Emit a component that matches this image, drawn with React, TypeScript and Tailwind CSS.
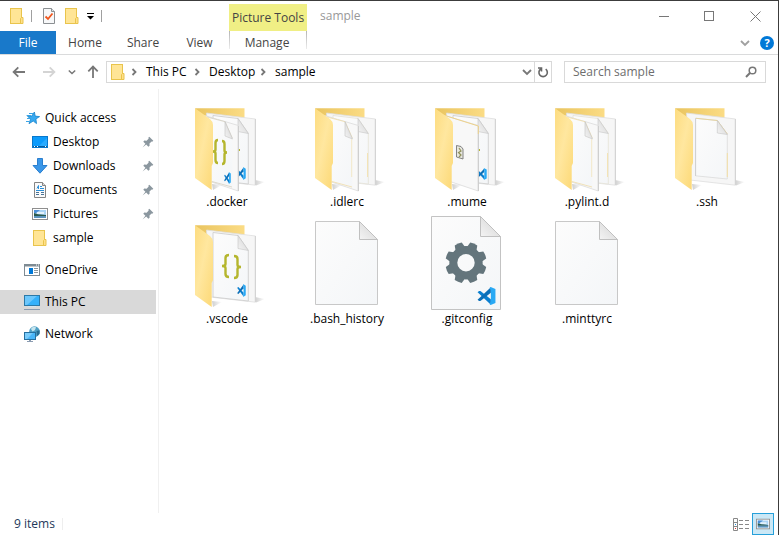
import type { ReactNode } from "react";

type SvgProps = { className?: string };

function FolderIcon({ className = "h-4 w-4" }: SvgProps) {
  return (
    <svg viewBox="0 0 16 16" className={`shrink-0 ${className}`} aria-hidden="true">
      <rect x="1.5" y="0.5" width="11" height="15" fill="#ffe596" stroke="#e9c44c" />
      <path d="M11.5 15.5V10.5L12.5 9.5H14V15.5Z" fill="#ffe08a" stroke="#e9c44c" />
    </svg>
  );
}

function CheckPageIcon() {
  return (
    <svg viewBox="0 0 14 16" className="h-4 w-3.5 shrink-0" aria-hidden="true">
      <path d="M1.5.5H9.5L12.5 3.5V15.5H1.5Z" fill="#f7f8f9" stroke="#8b8f92" />
      <path d="M9.5.5V3.5H12.5" fill="#dfe2e4" stroke="#8b8f92" />
      <path d="M3.5 8.5L6 11L10.5 5.5" fill="none" stroke="#f0561d" strokeWidth="1.8" />
    </svg>
  );
}

function Chevron({ className = "h-2.5 w-2.5 text-[#777]", down = false }: { className?: string; down?: boolean }) {
  return (
    <svg viewBox="0 0 10 10" className={`shrink-0 ${className}`} fill="none" stroke="currentColor" strokeWidth="1.8" aria-hidden="true">
      <path d={down ? "M1 3L5 7L9 3" : "M3.5 2L6.5 5L3.5 8"} />
    </svg>
  );
}

function Arrow({ turn }: { turn: string }) {
  return (
    <svg viewBox="0 0 14 14" className={`h-3.5 w-3.5 ${turn}`} fill="none" stroke="currentColor" strokeWidth="1.8" aria-hidden="true">
      <path d="M13 7H1.8M6.3 2.3L1.6 7L6.3 11.7" />
    </svg>
  );
}

function PinIcon() {
  return (
    <svg viewBox="0 0 12 12" className="h-3 w-3 shrink-0" aria-hidden="true">
      <path d="M7.3.8L11.3 4.8L10.2 5.8L9.6 5.5L7.5 7.6L7.6 9.8L6.4 10.8L4.2 8.6L.6 11.6L3.4 7.8L1.3 5.7L2.3 4.5L4.6 4.7L6.7 2.6L6.3 1.8Z" fill="#8b979f" />
    </svg>
  );
}

function StarIcon() {
  return (
    <svg viewBox="0 0 16 16" className="h-4 w-4 shrink-0" aria-hidden="true">
      <path d="M10.4 2L11.2 6.1L15.6 6.6L11.9 9L12.5 13.6L9.2 11L5 13.7L6.5 9.2L3.6 6.2L7.7 6.1Z" fill="#37a9f0" stroke="#1783cb" strokeWidth=".8" />
      <path d="M5 3.5H9M2.6 5.5H7M3 8.5H6M2 11.5H5.5" stroke="#3aa4e6" strokeWidth="1" />
    </svg>
  );
}

function DesktopIcon() {
  return (
    <svg viewBox="0 0 16 16" className="h-4 w-4 shrink-0" aria-hidden="true">
      <rect x=".5" y="2.5" width="15" height="11" fill="#0c9bfb" stroke="#0878cc" />
      <path d="M6 13L15 4V13Z" fill="#2aabff" />
      <path d="M1 12.5H15" stroke="#075c9e" />
      <path d="M2 12.5H3M5 12.5H6M13 12.5H14" stroke="#fff" />
    </svg>
  );
}

function DownloadIcon() {
  return (
    <svg viewBox="0 0 16 16" className="h-4 w-4 shrink-0" aria-hidden="true">
      <path d="M5.5.5H10.5V7.5H15L8 15.2L1 7.5H5.5Z" fill="#3b97e8" stroke="#2a7fcf" />
    </svg>
  );
}

function DocumentIcon() {
  return (
    <svg viewBox="0 0 16 16" className="h-4 w-4 shrink-0" aria-hidden="true">
      <path d="M2.5.5H10.5L13.5 3.5V15.5H2.5Z" fill="#fafafa" stroke="#848484" />
      <path d="M10.5.5V3.5H13.5" fill="#ddd" stroke="#848484" />
      <path d="M5 6.5L6.5 3.5V7M8 4.5H10M8 6.5H12M4 8.5H12" fill="none" stroke="#2b8fd8" />
      <path d="M4 10.5H7M9 10.5H12M4 12.5H7M9 12.5H12" stroke="#4a7396" />
    </svg>
  );
}

function PictureIcon({ className = "h-4 w-4" }: SvgProps) {
  return (
    <svg viewBox="0 0 16 16" className={`shrink-0 ${className}`} aria-hidden="true">
      <rect x=".5" y="2.5" width="15" height="11" fill="#fff" stroke="#8f8f8f" />
      <rect x="2" y="4" width="12" height="8" fill="#a9d3f5" />
      <path d="M2 4H8L4 7H2Z" fill="#4b8fd6" />
      <path d="M5 6H12V8H5Z" fill="#e3f1fb" />
      <path d="M2 7L6 8.2L14 9V10H2Z" fill="#2b5a4d" />
      <path d="M2 10H14V12H2Z" fill="#5b93bd" />
    </svg>
  );
}

function OneDriveIcon() {
  return (
    <svg viewBox="0 0 16 16" className="h-4 w-4 shrink-0" aria-hidden="true">
      <rect x=".5" y="2.5" width="15" height="11" fill="#fff" stroke="#7f8b93" />
      <path d="M0 3.5H16" stroke="#7f8b93" strokeWidth="2" />
      <path d="M12 3H13M14 3H15" stroke="#fff" />
      <rect x="5" y="6" width="4" height="6" fill="#0078d7" />
      <path d="M10 6.5H14M10 8.5H14M10 10.5H14" stroke="#8f999f" />
    </svg>
  );
}

function PcIcon() {
  return (
    <svg viewBox="0 0 16 16" className="h-4 w-4 shrink-0" aria-hidden="true">
      <rect x=".5" y="1.5" width="15" height="10" fill="#35b1fb" stroke="#2b79a8" />
      <path d="M1 2H13L3 11H1Z" fill="#6cc7fc" />
      <path d="M4 12.5H12" stroke="#d5e4ee" />
      <path d="M0 15.5H16" stroke="#8a9bb0" />
    </svg>
  );
}

function NetworkIcon() {
  return (
    <svg viewBox="0 0 16 16" className="h-4 w-4 shrink-0" aria-hidden="true">
      <circle cx="10.5" cy="5.7" r="5.4" fill="#4f9fc4" />
      <path d="M7 3C8 .8 11 .2 12 1.5L10.8 4.2L8.5 5.5Z" fill="#c6e5ee" />
      <path d="M12.5 5L15.5 4.2L15.5 8L13 10Z" fill="#286d92" />
      <rect x=".5" y="6.5" width="11" height="7" fill="#49b6f9" stroke="#256f9f" />
      <path d="M1 7H9L3 13H1Z" fill="#7accfb" />
      <path d="M5 14.5H7M3 15.5H9" stroke="#8a9bb0" />
    </svg>
  );
}

function CodeMark({ x, y, w, h }: { x: number; y: number; w: number; h: number }) {
  return (
    <svg x={x} y={y} width={w} height={h} viewBox="0 0 24 24" preserveAspectRatio="none">
      <path d="M.7 7.3L2.6 5.7L4.3 5.8L17.5 16.2V23.2Z" fill="#0a7fd0" />
      <path d="M.7 16.7L2.6 18.3L4.3 18.2L17.5 7.8V.8Z" fill="#0b6fb8" />
      <path d="M17.3.5L23.3 3.2V20.8L17.3 23.5L16 22.5L17.5 19V5L16 1.5Z" fill="#29a9f4" />
    </svg>
  );
}

function Braces({ left, right, top, h, w }: { left: number; right: number; top: number; h: number; w: number }) {
  return (
    <g fill="none" stroke="#b5b62e" strokeWidth="2.4">
      <path d={`M${left + w} ${top}q${-w / 2} 0 ${-w / 2} 3v${h / 2 - 5}q0 2 ${-w / 2} 2q${w / 2} 0 ${w / 2} 2v${h / 2 - 5}q0 3 ${w / 2} 3`} />
      <path d={`M${right} ${top + 1}q${w / 2} 0 ${w / 2} 3v${h / 2 - 5}q0 2 ${w / 2} 2q${-w / 2} 0 ${-w / 2} 2v${h / 2 - 5}q0 3 ${-w / 2} 3`} />
    </g>
  );
}

function Defs() {
  return (
    <svg className="absolute h-0 w-0" aria-hidden="true">
      <defs>
        <linearGradient id="flap" x1="0" y1="0" x2="1" y2="1">
          <stop offset="0" stopColor="#fddc80" />
          <stop offset=".45" stopColor="#ffe79f" />
          <stop offset="1" stopColor="#fcd875" />
        </linearGradient>
        <linearGradient id="back" x1="0" y1="0" x2="1" y2="0">
          <stop offset="0" stopColor="#e9c45f" />
          <stop offset="1" stopColor="#fbdc85" />
        </linearGradient>
        <linearGradient id="paper" x1="0" y1="0" x2="1" y2="1">
          <stop offset="0" stopColor="#fcfcfc" />
          <stop offset="1" stopColor="#f4f6f8" />
        </linearGradient>
        <linearGradient id="curl" x1="0" y1="1" x2="1" y2="0">
          <stop offset="0" stopColor="#f4f4f4" />
          <stop offset="1" stopColor="#d2d2d2" />
        </linearGradient>
        <linearGradient id="shade" x1="0" y1="0" x2="1" y2="0">
          <stop offset="0" stopColor="#cfcfcf" />
          <stop offset="1" stopColor="#ffffff" />
        </linearGradient>
      </defs>
    </svg>
  );
}

function FolderArt({ children }: { children: ReactNode }) {
  return (
    <svg viewBox="0 0 96 96" className="h-24 w-24 shrink-0" aria-hidden="true">
      <path d="M76 82L86 84L77 87.5Z" fill="url(#shade)" />
      <path d="M33 86L43 87L34 92Z" fill="url(#shade)" />
      <path d="M16 10.3H65.5V40H34Z" fill="url(#back)" />
      <path d="M27.5 15L76.5 21V87.2L31 82Z" fill="#f6f6f6" stroke="#dedede" strokeWidth=".8" />
      <path d="M76.3 21V87" stroke="#d0d0d0" />
      {children}
      <path d="M16 10.3L31 21Q34 23.5 34 27V65L32.7 68V92L16 80Z" fill="url(#flap)" />
    </svg>
  );
}

function RearPage({ edge = "#cfcfcf" }: { edge?: string }) {
  return (
    <g>
      <path d="M34 17.5L59 20.5L69.3 35.3V86L34 82Z" fill="url(#paper)" stroke={edge} strokeWidth=".9" />
      <path d="M59 20.5V33.5L69.3 35.5Z" fill="url(#curl)" stroke="#c4c4c4" strokeWidth=".6" />
    </g>
  );
}

function FrontSheet() {
  return (
    <g>
      <path d="M25.5 17.5L59.3 27.5V93L31 83.5Z" fill="#f8f8f8" stroke="#dadada" strokeWidth=".8" />
      <path d="M59.3 28V93" stroke="#cacaca" />
    </g>
  );
}

function FrontPage({ edge }: { edge: string }) {
  return (
    <g>
      <FrontSheet />
      <path d="M28 19L46 23.7L53.3 40V89L33 83.5Z" fill="url(#paper)" />
      <path d="M28 19L46 23.7L53.3 40M33 83.5L53 89" fill="none" stroke={edge} strokeWidth=".8" />
      <path d="M46 23.7V38L53.5 41Z" fill="url(#curl)" stroke="#c4c4c4" strokeWidth=".6" />
    </g>
  );
}

function DockerArt() {
  return (
    <FolderArt>
      <RearPage />
      <path d="M58 52h3" stroke="#b5b62e" strokeWidth="2" />
      <CodeMark x={58} y={69} w={9} h={13} />
      <FrontPage edge="#d6d0c0" />
      <Braces left={34} right={43} top={42} h={23} w={5} />
      <CodeMark x={45} y={74} w={7} h={12} />
    </FolderArt>
  );
}

function PagesArt() {
  return (
    <FolderArt>
      <RearPage edge="#e7e4da" />
      <path d="M68.5 55V79" stroke="#f3e3b6" />
      <FrontPage edge="#efdca8" />
      <path d="M52.7 41V79" stroke="#f3e8c8" />
    </FolderArt>
  );
}

function MumeArt() {
  return (
    <FolderArt>
      <RearPage />
      <path d="M58 52h3" stroke="#b5b62e" strokeWidth="2" />
      <CodeMark x={58} y={70} w={10} h={12} />
      <FrontSheet />
      <path d="M26 17.5L59.3 28V36" fill="none" stroke="#eed28a" />
      <path d="M37.5 47.5L42 48.5L44 51V61L37.5 59Z" fill="#e8e8e0" stroke="#777" strokeWidth=".9" />
      <path d="M40 50L42 53L39.5 54.5L42 57L40 59" fill="none" stroke="#8f905a" strokeWidth="1.2" />
    </FolderArt>
  );
}

function SshArt() {
  return (
    <FolderArt>
      <path d="M36.7 20.3L58.3 22.5L68.3 36V81L36.7 77.8Z" fill="url(#paper)" stroke="#dadada" strokeWidth=".8" />
      <path d="M36.5 20.3V78" stroke="#cccccc" strokeWidth=".8" />
      <path d="M37 20.3L58.3 22.5L68.3 36" fill="none" stroke="#e6d4a0" />
      <path d="M68.3 55V79" stroke="#f3dfa6" />
      <path d="M58.3 22.5V35L68.3 36.5Z" fill="url(#curl)" stroke="#c4c4c4" strokeWidth=".6" />
    </FolderArt>
  );
}

function VscodeArt() {
  return (
    <FolderArt>
      <RearPage />
      <Braces left={43} right={55} top={40} h={22} w={7} />
      <CodeMark x={58} y={69} w={9} h={13} />
    </FolderArt>
  );
}

function BlankFileArt() {
  return (
    <svg viewBox="0 0 96 96" className="h-24 w-24 shrink-0" aria-hidden="true">
      <path d="M16.5 6.5H60.5L78.5 24.5V89.5H16.5Z" fill="url(#paper)" stroke="#c8c8c8" />
      <path d="M60.5 6.5V24.5H78.5Z" fill="url(#curl)" stroke="#c0c0c0" />
    </svg>
  );
}

const teeth = [22.5, 67.5, 112.5, 157.5, 202.5, 247.5, 292.5, 337.5];

function GearFileArt() {
  return (
    <svg viewBox="0 0 96 96" className="h-24 w-24 shrink-0" aria-hidden="true">
      <path d="M12.5 1.5H61.5L81.5 21.5V94.5H12.5Z" fill="url(#paper)" stroke="#c3c3c3" />
      <path d="M61.5 1.5V21.5H81.5Z" fill="url(#curl)" stroke="#c0c0c0" />
      <circle cx="47" cy="47.7" r="12.7" fill="none" stroke="#64757c" strokeWidth="8" />
      {teeth.map((angle) => (
        <path key={angle} d="M41.6 34L43.2 27.4Q47 26.6 50.8 27.4L52.4 34Z" fill="#64757c" transform={`rotate(${angle} 47 47.7)`} />
      ))}
      <CodeMark x={58} y={71.5} w={19} h={19} />
    </svg>
  );
}

const files = [
  { name: ".docker", art: <DockerArt /> },
  { name: ".idlerc", art: <PagesArt /> },
  { name: ".mume", art: <MumeArt /> },
  { name: ".pylint.d", art: <PagesArt /> },
  { name: ".ssh", art: <SshArt /> },
  { name: ".vscode", art: <VscodeArt /> },
  { name: ".bash_history", art: <BlankFileArt /> },
  { name: ".gitconfig", art: <GearFileArt /> },
  { name: ".minttyrc", art: <BlankFileArt /> },
];

const quickLinks = [
  { name: "Desktop", icon: <DesktopIcon />, pinned: true },
  { name: "Downloads", icon: <DownloadIcon />, pinned: true },
  { name: "Documents", icon: <DocumentIcon />, pinned: true },
  { name: "Pictures", icon: <PictureIcon />, pinned: true },
  { name: "sample", icon: <FolderIcon />, pinned: false },
];

function SideLink({ name, icon, nested = false, pinned = false, current = false }: { name: string; icon: ReactNode; nested?: boolean; pinned?: boolean; current?: boolean }) {
  return (
    <a href="#" aria-current={current ? "page" : undefined} className={`flex h-6 items-center gap-[5px] pr-0.5 ${nested ? "pl-8" : "pl-6"} ${current ? "bg-[#d9d9d9]" : ""}`}>
      {icon}
      <span className="flex-1">{name}</span>
      {pinned && <PinIcon />}
    </a>
  );
}

function TitleBar() {
  return (
    <header className="flex h-[30px] items-end bg-white">
      <div className="flex h-[30px] w-[229px] items-center pl-[9px]">
        <button aria-label="Window menu"><FolderIcon /></button>
        <span className="ml-1.5 h-3 w-px bg-[#a0a0a0]" />
        <button aria-label="Properties" className="ml-2.5"><CheckPageIcon /></button>
        <button aria-label="New folder" className="ml-2"><FolderIcon /></button>
        <button aria-label="Customize toolbar" className="ml-1.5">
          <svg viewBox="0 0 8 8" className="h-2 w-2"><path d="M1 1H8V2H1ZM1 4H8L4.5 7.5Z" fill="#000" /></svg>
        </button>
        <span className="ml-[7px] h-3 w-px bg-[#a0a0a0]" />
      </div>
      <div className="flex h-[27px] w-[78px] items-center justify-center bg-[#f0ef85] text-[#444]">Picture Tools</div>
      <h1 className="flex h-[30px] flex-1 items-center pl-[13px] text-[#999]">sample</h1>
      <div className="flex h-[30px] text-[#777]">
        <button aria-label="Minimize" className="flex w-[46px] items-center justify-center">
          <svg viewBox="0 0 11 11" className="h-[11px] w-[11px]" stroke="currentColor"><path d="M0 5.5H10" /></svg>
        </button>
        <button aria-label="Maximize" className="flex w-[45px] items-center justify-center">
          <svg viewBox="0 0 11 11" className="h-[11px] w-[11px]" fill="none" stroke="currentColor"><rect x=".5" y=".5" width="9" height="9" /></svg>
        </button>
        <button aria-label="Close" className="flex w-[46px] items-center justify-center">
          <svg viewBox="0 0 11 11" className="h-[11px] w-[11px]" stroke="currentColor"><path d="M.5 .5L10.5 10.5M10.5 .5L.5 10.5" /></svg>
        </button>
      </div>
    </header>
  );
}

function RibbonTabs() {
  return (
    <nav aria-label="Ribbon" className="flex h-6 border-b border-[#dadbdc] text-[#444]">
      <button className="w-14 bg-[#1979ca] text-white">File</button>
      <button className="w-[58px]">Home</button>
      <button className="w-[58px]">Share</button>
      <button className="w-[57px] pr-0.5">View</button>
      <div className="flex w-[78px]">
        <span className="h-[18px] w-px bg-linear-to-b from-[#b5b5b5] to-[#ececec]" />
        <button className="flex-1 pr-0.5">Manage</button>
        <span className="h-[18px] w-px bg-linear-to-b from-[#b5b5b5] to-[#ececec]" />
      </div>
      <div className="flex flex-1 items-center justify-end gap-2.5 pr-1">
        <button aria-label="Expand ribbon"><Chevron down className="h-2.5 w-2.5 text-[#a0a0a0]" /></button>
        <button aria-label="Help" className="flex h-3.5 w-3.5 items-center justify-center rounded-full bg-[#0078d7] text-[11px] leading-none font-bold text-white">?</button>
      </div>
    </nav>
  );
}

function AddressRow() {
  return (
    <div className="flex items-center gap-3 px-3 py-1.5">
      <div className="flex flex-1 items-center">
        <div className="flex w-[94px] items-center text-[#777]">
          <button aria-label="Back"><Arrow turn="" /></button>
          <button aria-label="Forward" className="ml-4 text-[#d4d4d4]"><Arrow turn="rotate-180" /></button>
          <button aria-label="Recent locations" className="ml-3"><Chevron down className="h-2 w-2" /></button>
          <button aria-label="Up" className="ml-2.5"><Arrow turn="rotate-90" /></button>
        </div>
        <div className="flex h-[22px] flex-1 items-center border border-[#d9d9d9] pl-[3px]">
          <FolderIcon />
          <div className="flex flex-1 items-center">
            <Chevron className="mr-[3px] ml-[3px] h-2.5 w-2.5 text-[#777]" />
            <button className="w-[50px] pl-1 text-left">This PC</button>
            <Chevron className="h-2.5 w-2.5 text-[#777]" />
            <button className="w-14 pl-[7px] text-left">Desktop</button>
            <Chevron className="h-2.5 w-2.5 text-[#777]" />
            <button className="pl-[7px]">sample</button>
          </div>
          <button aria-label="Previous locations" className="px-0.5 text-[#777]"><Chevron down className="h-2.5 w-2.5" /></button>
          <button aria-label="Refresh" className="flex h-5 w-[17px] items-center justify-center border-l border-[#d9d9d9]">
            <svg viewBox="0 0 12 12" className="h-3 w-3" fill="none" stroke="#666" strokeWidth="1.6"><path d="M3.7 3A4.2 4.2 0 1 0 8.7 3.1M1 2H4.5V5.5" /></svg>
          </button>
        </div>
      </div>
      <label className="flex h-[22px] w-[202px] items-center border border-[#d9d9d9] pr-2 pl-2">
        <input aria-label="Search sample" placeholder="Search sample" className="min-w-0 flex-1 bg-transparent outline-none placeholder:text-[#6d6d6d]" />
        <svg viewBox="0 0 12 12" className="h-3 w-3" fill="none" stroke="#777" aria-hidden="true"><circle cx="7.5" cy="4.5" r="3.3" strokeWidth="1.5" /><path d="M5.2 6.8L1 11" strokeWidth="2" /></svg>
      </label>
    </div>
  );
}

export default function App() {
  return (
    <div className="flex min-h-screen flex-col border-t border-r border-[#3c3c3c] bg-white font-['Open_Sans','Noto_Sans',sans-serif] text-xs leading-4 text-black">
      <Defs />
      <TitleBar />
      <RibbonTabs />
      <AddressRow />
      <div className="flex flex-1">
        <nav aria-label="Folders" className="flex w-[159px] flex-col gap-2 border-r border-[#f0f0f0] pt-[17px] pr-0.5">
          <div>
            <SideLink name="Quick access" icon={<StarIcon />} />
            {quickLinks.map((link) => (
              <SideLink key={link.name} {...link} nested />
            ))}
          </div>
          <SideLink name="OneDrive" icon={<OneDriveIcon />} />
          <SideLink name="This PC" icon={<PcIcon />} current />
          <SideLink name="Network" icon={<NetworkIcon />} />
        </nav>
        <main className="grid flex-1 grid-cols-[repeat(auto-fill,120px)] content-start gap-y-[5px] pt-[9px] pl-2">
          {files.map((file) => (
            <button key={file.name} className="flex flex-col items-center">
              {file.art}
              <span>{file.name}</span>
            </button>
          ))}
        </main>
      </div>
      <footer className="flex h-[22px] items-center pr-1 pl-3.5 text-[#1e395b]">
        <span className="w-12">9 items</span>
        <span className="h-3 w-px bg-[#eeeeee]" />
        <div className="ml-auto flex items-center">
          <button aria-label="Details view" className="px-[3px]">
            <svg viewBox="0 0 16 13" className="h-[13px] w-4" fill="none" stroke="#888">
              <path d="M.5.5H4.5V12.5H.5ZM.5 4.5H4.5M.5 8.5H4.5" />
              <path d="M6 2.5H10M12 2.5H16M6 6.5H10M12 6.5H16M6 10.5H10M12 10.5H16" />
              <path d="M2 6.5H3" stroke="#2a8dd4" /><path d="M2 10.5H3" stroke="#d33" />
            </svg>
          </button>
          <button aria-label="Large icons view" className="flex h-[22px] w-[22px] items-center justify-center border border-[#26a0da] bg-[#cbe8f6]">
            <PictureIcon className="h-3.5 w-3.5" />
          </button>
        </div>
      </footer>
    </div>
  );
}
